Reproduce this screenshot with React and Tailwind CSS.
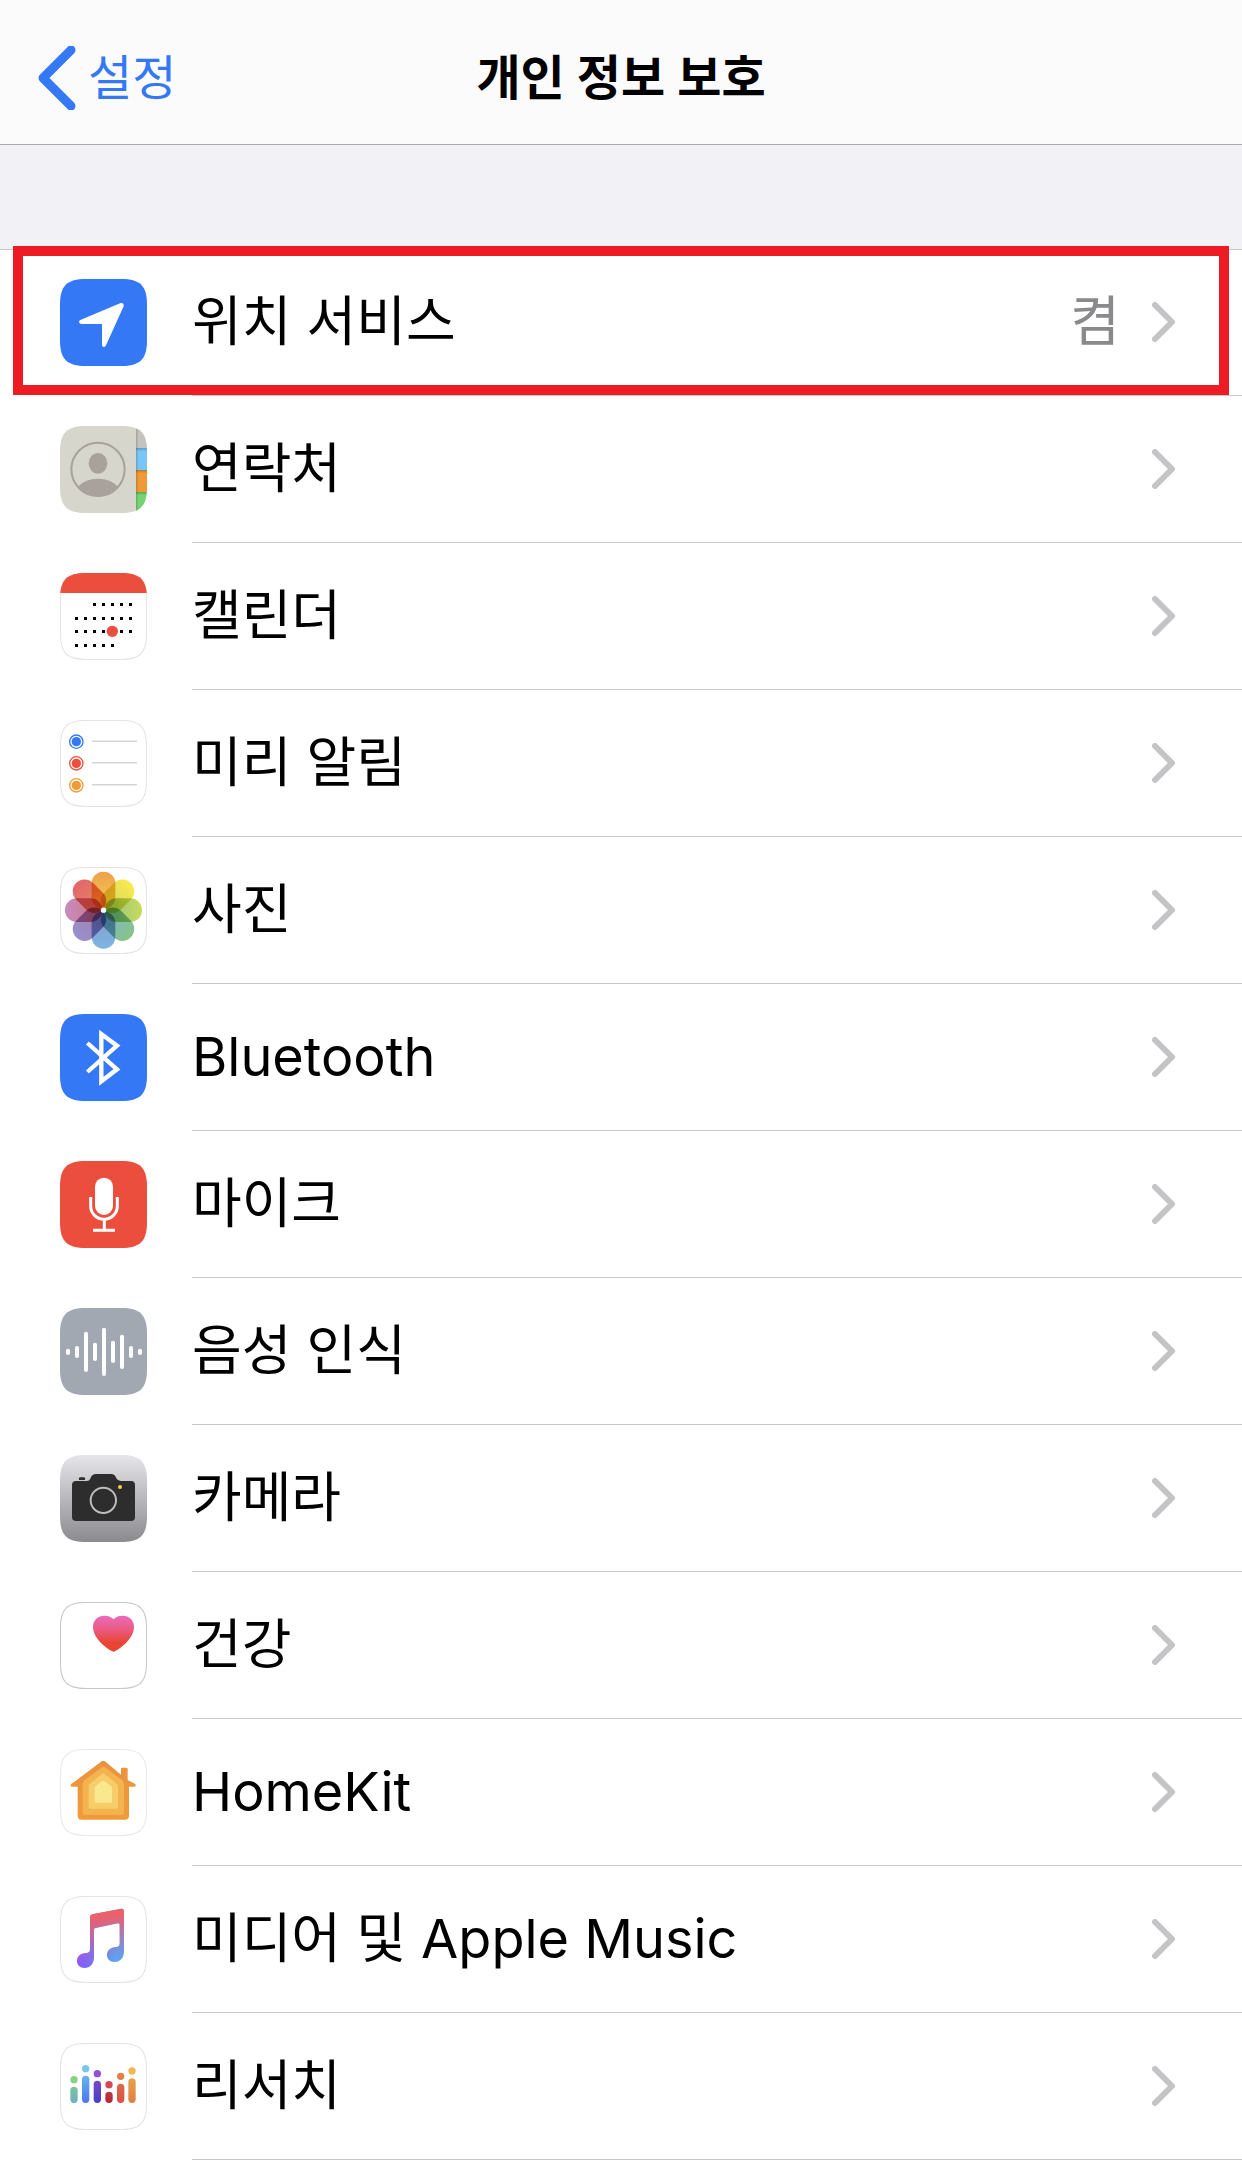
import React from "react";

const SQUIRCLE =
  "M0 78C0 20 20 0 78 0H183C241 0 261 20 261 78V183C261 241 241 261 183 261H78C20 261 0 241 0 183Z";

/* Every app icon is drawn on a 261-unit square with the same rounded shape. */
function Tile({ id, fill = "#fff", outline, children }) {
  return (
    <svg viewBox="0 0 261 261" className="my-[30px] size-[87px] shrink-0" aria-hidden="true">
      <defs>
        <clipPath id={`${id}-clip`}>
          <path d={SQUIRCLE} />
        </clipPath>
      </defs>
      <g clipPath={`url(#${id}-clip)`}>
        <rect width="261" height="261" fill={fill} />
        {children}
        {outline && <path d={SQUIRCLE} fill="none" stroke={outline} strokeWidth="6" />}
      </g>
    </svg>
  );
}

function LocationIcon() {
  return (
    <Tile id="location" fill="#3478f6">
      <path
        fill="#fff"
        d="M182 72L61 123Q57 125 57 129Q58 135 65 135H126V197Q126 204 132 204Q136 204 138 199L191 82Q192 70 182 72Z"
      />
    </Tile>
  );
}

function ContactsIcon() {
  return (
    <Tile id="contacts" fill="#d6d6cd">
      <defs>
        <linearGradient id="tab-shade" x1="0" x2="0" y1="0" y2="1">
          <stop offset="0" stopColor="#000" stopOpacity=".22" />
          <stop offset="1" stopColor="#000" stopOpacity="0" />
        </linearGradient>
        <linearGradient id="spine-shade">
          <stop offset="0" stopColor="#000" stopOpacity=".18" />
          <stop offset="1" stopColor="#000" stopOpacity="0" />
        </linearGradient>
      </defs>
      <rect x="228" width="33" height="66" fill="#c5c4bc" />
      <rect x="228" y="66" width="33" height="66" fill="#78c5f7" />
      <rect x="228" y="132" width="33" height="66" fill="#f09a37" />
      <rect x="228" y="198" width="33" height="63" fill="#76d572" />
      <rect x="228" y="66" width="33" height="10" fill="url(#tab-shade)" />
      <rect x="228" y="132" width="33" height="10" fill="url(#tab-shade)" />
      <rect x="228" y="198" width="33" height="10" fill="url(#tab-shade)" />
      <rect x="228" width="8" height="261" fill="url(#spine-shade)" />
      <circle cx="114" cy="130" r="80" fill="none" stroke="#a9a19b" strokeWidth="6" />
      <ellipse cx="114" cy="112" rx="28" ry="31" fill="#a9a19b" />
      <path fill="#a9a19b" d="M54 182Q76 158 114 158Q152 158 174 182A80 80 0 0 1 54 182Z" />
    </Tile>
  );
}

const CALENDAR_ROWS = [
  { y: 94, from: 2, to: 6 },
  { y: 136, from: 0, to: 6 },
  { y: 175, from: 0, to: 6 },
  { y: 217, from: 0, to: 4 },
];

function CalendarIcon() {
  return (
    <Tile id="calendar">
      {CALENDAR_ROWS.map((row) =>
        [0, 1, 2, 3, 4, 5, 6]
          .filter((c) => c >= row.from && c <= row.to)
          .map((c) => <rect key={`${row.y}-${c}`} x={45 + c * 27} y={row.y - 4} width="9" height="9" />)
      )}
      <circle cx="157" cy="175" r="17" fill="#eb4e3d" />
      <path d={SQUIRCLE} fill="none" stroke="#e4e4e4" strokeWidth="6" />
      <rect width="261" height="60" fill="#eb4e3d" />
    </Tile>
  );
}

function RemindersIcon() {
  return (
    <Tile id="reminders" outline="#e4e4e4">
      {[
        [65, "#3478f6"],
        [130, "#eb4e3d"],
        [196, "#f09a37"],
      ].map(([y, color]) => (
        <g key={color}>
          <circle cx="49" cy={y} r="20" fill="none" stroke={color} strokeWidth="4" />
          <circle cx="49" cy={y} r="14" fill={color} />
          <rect x="96" y={y - 3} width="135" height="3" fill="#bfbfbf" />
        </g>
      ))}
    </Tile>
  );
}

const PETALS = [
  ["#f0a04c", "#f0c152"],
  ["#fbea4c", "#dcda62"],
  ["#c6dc5c", "#a4c77c"],
  ["#86c488", "#84b9b8"],
  ["#7db6e2", "#85a0d0"],
  ["#9a90cc", "#9f84b4"],
  ["#c68cc0", "#cf7c90"],
  ["#e2666c", "#e48062"],
];

function PhotosIcon() {
  return (
    <Tile id="photos" outline="#e4e4e4">
      <defs>
        {PETALS.map(([outer, inner], i) => (
          <linearGradient key={outer} id={`petal-${i}`} x1="0" x2="0" y1="0" y2="1">
            <stop offset="0" stopColor={outer} />
            <stop offset="0.7" stopColor={inner} />
          </linearGradient>
        ))}
      </defs>
      {PETALS.map(([outer], i) => (
        <rect
          key={outer}
          x="95"
          y="14"
          width="71"
          height="112"
          rx="35"
          fill={`url(#petal-${i})`}
          transform={`rotate(${i * 45} 130.5 129.5)`}
          className="mix-blend-multiply"
        />
      ))}
      <circle cx="130.5" cy="129.5" r="8" fill="#fff" />
    </Tile>
  );
}

function BluetoothIcon() {
  return (
    <Tile id="bluetooth" fill="#3478f6">
      <path fill="none" stroke="#fff" strokeWidth="13" d="M82 87L171 166L124 202V60L171 95L82 174" />
    </Tile>
  );
}

function MicrophoneIcon() {
  return (
    <Tile id="microphone" fill="#eb4e3d">
      <rect x="105" y="50" width="54" height="112" rx="27" fill="#fff" />
      <path
        fill="none"
        stroke="#fff"
        strokeWidth="9"
        d="M92 108V135A40 40 0 0 0 172 135V108M133 176V208M99 208H165"
      />
    </Tile>
  );
}

const WAVE = [
  [122, 141],
  [114, 150],
  [71, 192],
  [104, 159],
  [59, 204],
  [98, 165],
  [80, 183],
  [114, 150],
  [122, 141],
];

function SpeechIcon() {
  return (
    <Tile id="speech" fill="#a2a8b2">
      {WAVE.map(([top, bottom], i) => (
        <rect key={i} x={18 + i * 27} y={top} width="12" height={bottom - top} rx="6" fill="#fff" />
      ))}
    </Tile>
  );
}

function CameraIcon() {
  return (
    <Tile id="camera" fill="url(#camera-body)">
      <defs>
        <linearGradient id="camera-body" x1="0" x2="0" y1="0" y2="1">
          <stop offset="0" stopColor="#e5e5ea" />
          <stop offset="1" stopColor="#8a8a8f" />
        </linearGradient>
      </defs>
      <path
        fill="#2d2d2d"
        d="M48 78H80Q88 78 91 71Q95 57 108 57H153Q165 57 169 70Q173 78 182 78H213Q225 78 225 90V186Q225 198 213 198H48Q36 198 36 186V90Q36 78 48 78Z"
      />
      <path fill="#2d2d2d" d="M57 75V70Q57 67 61 67H71Q75 67 75 70V75Z" />
      <circle cx="130" cy="136" r="38" fill="none" stroke="#bdbdc1" strokeWidth="6" />
      <circle cx="180" cy="96" r="6" fill="#f8d13c" />
    </Tile>
  );
}

function HealthIcon() {
  return (
    <Tile id="health" outline="#c7c7c9">
      <defs>
        <linearGradient id="heart-fill" x1="0" x2="0" y1="0" y2="1">
          <stop offset="0.05" stopColor="#eb68b4" />
          <stop offset="0.4" stopColor="#ea5a80" />
          <stop offset="0.75" stopColor="#ea4434" />
        </linearGradient>
      </defs>
      <path
        fill="url(#heart-fill)"
        d="M161 149C151 148 99 113 99 75C99 54 114 41 133 41C146 41 155 46 161 52C166 46 175 41 188 41C207 41 222 54 222 75C222 113 170 148 161 149Z"
      />
    </Tile>
  );
}

function HomeIcon() {
  return (
    <Tile id="home" outline="#e9e9e9">
      <defs>
        <linearGradient id="house-fill" x1="0" x2="0" y1="0" y2="1">
          <stop offset="0" stopColor="#ea923f" />
          <stop offset="1" stopColor="#f19c38" />
        </linearGradient>
      </defs>
      <path
        fill="url(#house-fill)"
        d="M125 37Q130 33 135 37L183 77V60Q183 56 187 56H199Q203 56 203 60V93L226 105Q229 113 223 113H207V200Q207 212 195 212H65Q53 212 53 200V113H36Q30 113 33 106Z"
      />
      <path fill="#f3b44f" d="M126 55Q130 51 134 55L186 93Q192 98 192 105V191Q192 197 186 197H74Q68 197 68 191V105Q68 98 74 93Z" />
      <path fill="#f6cd68" d="M126 75Q130 71 134 75L169 103Q174 108 174 113V175Q174 179 170 179H90Q86 179 86 175V113Q86 108 91 103Z" />
      <path fill="#fae88e" d="M126 97Q130 93 134 97L152 110Q156 113 156 118V158Q156 161 153 161H107Q104 161 104 158V118Q104 113 108 110Z" />
    </Tile>
  );
}

const NOTE =
  "M184 38L97 55Q90 57 90 64V161Q90 168 83 170L72 172C58 175 51 184 51 195C51 207 60 216 73 216C91 216 102 203 102 184V101Q102 97 106 96L173 82Q179 81 179 86V143Q179 150 172 152L162 154C148 157 141 166 141 177C141 189 150 198 163 198C181 198 192 185 192 166V44Q191 37 184 38Z";

function MusicIcon() {
  return (
    <Tile id="music" outline="#e4e4e4">
      <defs>
        <linearGradient id="note-base">
          <stop offset="0" stopColor="#8d58f8" />
          <stop offset="0.4" stopColor="#6f78f4" />
          <stop offset="0.8" stopColor="#5aa4f2" />
        </linearGradient>
        <linearGradient id="note-warm" x1="0.3" x2="0.4" y1="0" y2="0.9">
          <stop offset="0.15" stopColor="#ee6066" />
          <stop offset="0.4" stopColor="#dd6484" stopOpacity="0.85" />
          <stop offset="1" stopColor="#c061a8" stopOpacity="0" />
        </linearGradient>
      </defs>
      <path d={NOTE} fill="url(#note-base)" />
      <path d={NOTE} fill="url(#note-warm)" />
    </Tile>
  );
}

const FIGURES = [
  { x: 42, dot: 110, top: 131, c: ["#8ccf86", "#7fc39c", "#6db0c2"] },
  { x: 77, dot: 77, top: 98, c: ["#78c8ee", "#68b2ee", "#4878ee"] },
  { x: 112, dot: 92, top: 113, c: ["#9150d8", "#7648cc", "#4840c4"] },
  { x: 147, dot: 125, top: 146, c: ["#d4485a", "#c23644", "#b02834"] },
  { x: 182, dot: 100, top: 122, c: ["#e2804a", "#de6a4a", "#da5044"] },
  { x: 216, dot: 84, top: 106, c: ["#ecb850", "#e4a44c", "#e27e42"] },
];

function ResearchIcon() {
  return (
    <Tile id="research" outline="#e4e4e4">
      {FIGURES.map((f) => (
        <g key={f.x}>
          <linearGradient id={`figure-${f.x}`} x1="0" x2="0" y1="0" y2="1">
            <stop offset="0" stopColor={f.c[1]} />
            <stop offset="1" stopColor={f.c[2]} />
          </linearGradient>
          <circle cx={f.x} cy={f.dot} r="11" fill={f.c[0]} />
          <rect x={f.x - 11} y={f.top} width="22" height={180 - f.top} rx="11" fill={`url(#figure-${f.x})`} />
        </g>
      ))}
    </Tile>
  );
}

const ITEMS = [
  { label: "위치 서비스", value: "켬", Icon: LocationIcon, highlighted: true },
  { label: "연락처", Icon: ContactsIcon },
  { label: "캘린더", Icon: CalendarIcon },
  { label: "미리 알림", Icon: RemindersIcon },
  { label: "사진", Icon: PhotosIcon },
  { label: "Bluetooth", Icon: BluetoothIcon },
  { label: "마이크", Icon: MicrophoneIcon },
  { label: "음성 인식", Icon: SpeechIcon },
  { label: "카메라", Icon: CameraIcon },
  { label: "건강", Icon: HealthIcon },
  { label: "HomeKit", Icon: HomeIcon },
  { label: "미디어 및 Apple Music", Icon: MusicIcon },
  { label: "리서치", Icon: ResearchIcon },
];

function Row({ label, value, Icon, highlighted }) {
  return (
    <li className="relative">
      <a href="#" className="flex gap-[45px] pl-[60px]">
        <Icon />
        <span className="flex flex-1 items-center border-b border-[#c6c6c8] pr-[66px]">
          <span className="flex-1">{label}</span>
          {value && <span className="mr-8 text-[#8a8a8d]">{value}</span>}
          <svg viewBox="0 0 24 40" className="h-10 w-6 shrink-0" aria-hidden="true">
            <path
              d="M3 3L20 20L3 37"
              fill="none"
              stroke="#c4c4c6"
              strokeWidth="6"
              strokeLinecap="round"
              strokeLinejoin="round"
            />
          </svg>
        </span>
      </a>
      {highlighted && (
        <span className="pointer-events-none absolute inset-x-[13px] -top-[3px] bottom-px border-10 border-[#ed1c24]" />
      )}
    </li>
  );
}

export default function App() {
  return (
    <div className="min-h-screen bg-[#f2f1f6] font-['Inter','Noto_Sans_CJK_KR',sans-serif] text-black">
      <header className="grid grid-cols-[1fr_auto_1fr] items-center border-b border-[#a9a8ad] bg-[#fbfbfc] pt-[42px] pb-[30px] text-[48px] leading-[72px]">
        <a href="#" className="flex items-center gap-3 pl-[38px] text-[#3478f6]">
          <svg viewBox="0 0 38 64" className="h-16 w-[38px]" aria-hidden="true">
            <path
              d="M33 4L5 32L33 60"
              fill="none"
              stroke="currentColor"
              strokeWidth="9"
              strokeLinecap="round"
              strokeLinejoin="round"
            />
          </svg>
          설정
        </a>
        <h1 className="font-semibold">개인 정보 보호</h1>
      </header>
      <main className="pt-[104px]">
        <ul className="bg-white text-[54px] leading-[72px] shadow-[inset_0_1px_0_#c6c6c8]">
          {ITEMS.map((item) => (
            <Row key={item.label} {...item} />
          ))}
        </ul>
      </main>
    </div>
  );
}
